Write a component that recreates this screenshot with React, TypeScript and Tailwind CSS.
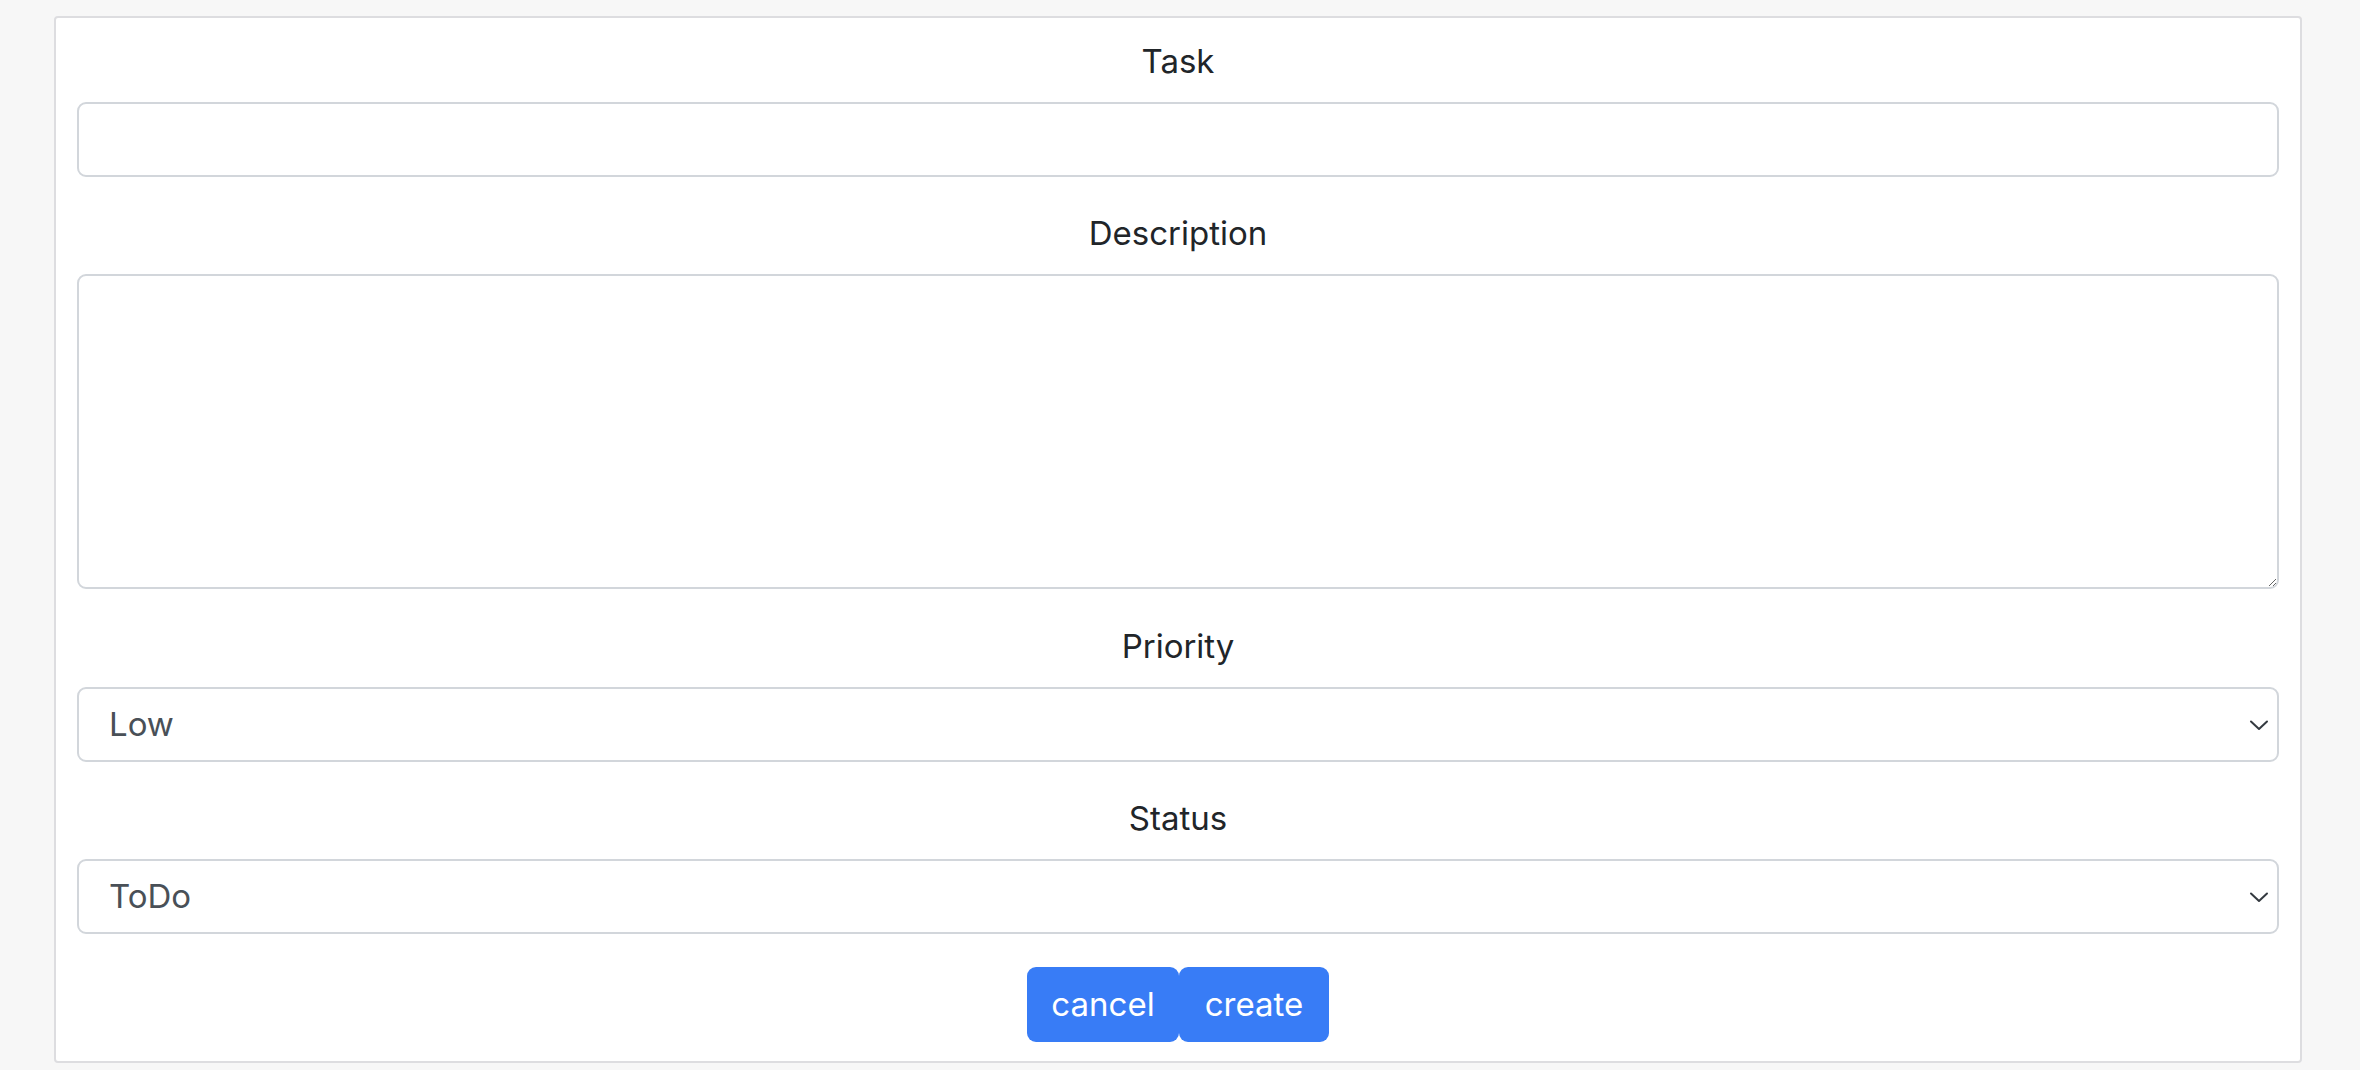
import React from "react";

const font = { fontFamily: "Inter, 'Noto Sans', sans-serif" };

function Chevron() {
  return (
    <svg
      className="pointer-events-none absolute right-[10px] top-1/2 -translate-y-1/2"
      width="20"
      height="12"
      viewBox="0 0 20 12"
      fill="none"
    >
      <path d="M2 2.5 L10 10 L18 2.5" stroke="#343a40" strokeWidth="2" strokeLinecap="round" strokeLinejoin="round" />
    </svg>
  );
}

function Label({ children }: { children: React.ReactNode }) {
  return (
    <label className="mb-4 block h-[50px] text-center text-[33px] leading-[50px] text-[#212529]">{children}</label>
  );
}

const field =
  "block w-full rounded-[9px] border-2 border-[#d2d6db] bg-white text-[33px] text-[#495057] outline-none";

export default function App() {
  return (
    <div className="min-h-[1070px] w-full bg-[#f7f7f7] pt-4" style={font}>
      <div className="ml-[54px] w-[2248px] rounded-[4px] border-2 border-[#dddde0] bg-white px-[21px] pb-[19px] pt-[18px]">
        <Label>Task</Label>
        <input type="text" className={`${field} h-[75px] px-[32px]`} />
        <div className="mt-[31px]">
          <Label>Description</Label>
          <textarea className={`${field} h-[315px] px-[32px] py-[12px]`} />
        </div>
        <div className="mt-[32px]">
          <Label>Priority</Label>
          <div className="relative">
            <select className={`${field} h-[75px] appearance-none pl-[30px]`} defaultValue="Low">
              <option>Low</option>
              <option>Medium</option>
              <option>High</option>
            </select>
            <Chevron />
          </div>
        </div>
        <div className="mt-[31px]">
          <Label>Status</Label>
          <div className="relative">
            <select className={`${field} h-[75px] appearance-none pl-[30px]`} defaultValue="ToDo">
              <option>ToDo</option>
              <option>InProgress</option>
              <option>Done</option>
            </select>
            <Chevron />
          </div>
        </div>
        <div className="mt-[33px] flex justify-center">
          <button className="h-[75px] w-[152px] rounded-[9px] bg-[#387cf6] text-[33px] text-white">cancel</button>
          <button className="h-[75px] w-[150px] rounded-[9px] bg-[#387cf6] text-[33px] text-white">create</button>
        </div>
      </div>
    </div>
  );
}
